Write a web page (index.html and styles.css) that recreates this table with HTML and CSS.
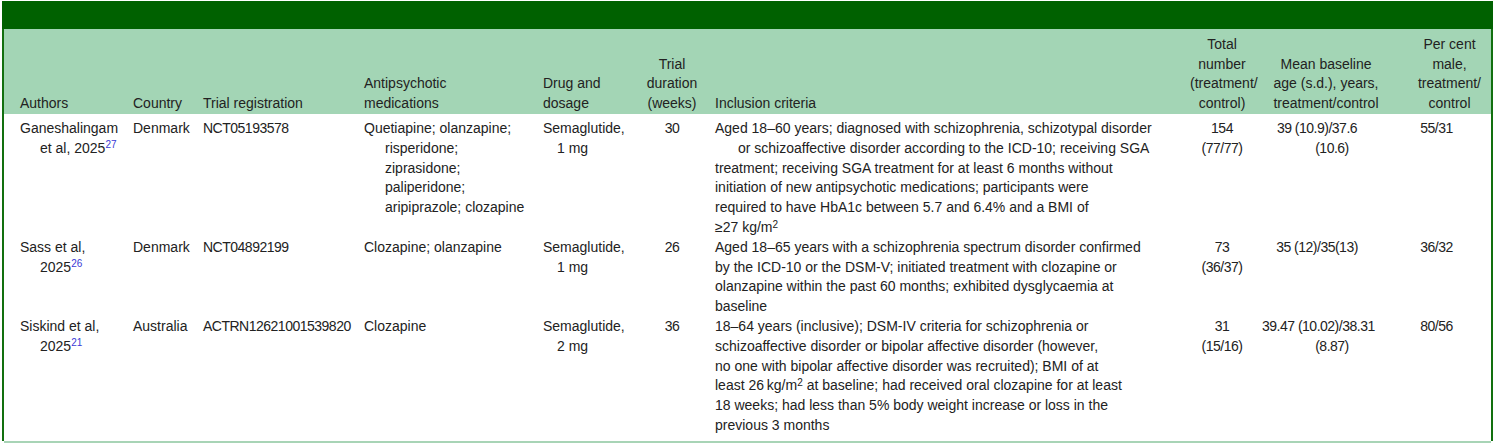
FILE: index.html
```html
<!DOCTYPE html>
<html>
<head>
<meta charset="utf-8">
<link rel="stylesheet" href="styles.css">
</head>
<body>
<div class="wrap">
  <div class="bar"></div>
  <table class="tbl">
    <colgroup>
      <col class="w1"><col class="w2"><col class="w3"><col class="w4"><col class="w5">
      <col class="w6"><col class="w7"><col class="w8"><col class="w9"><col class="w10">
    </colgroup>
    <thead>
      <tr>
        <th class="c1">Authors</th>
        <th>Country</th>
        <th>Trial registration</th>
        <th>Antipsychotic<br>medications</th>
        <th>Drug and<br>dosage</th>
        <th class="c6">Trial<br>duration<br>(weeks)</th>
        <th>Inclusion criteria</th>
        <th class="c8">Total<br>number<br>(treatment/<br>control)</th>
        <th class="c9">Mean baseline<br>age (s.d.), years,<br>treatment/control</th>
        <th class="c10">Per cent<br>male,<br>treatment/<br>control</th>
      </tr>
    </thead>
    <tbody>
      <tr class="first">
        <td class="c1"><div>Ganeshalingam</div><div class="i20">et al, 2025<sup class="ref">27</sup></div></td>
        <td><div>Denmark</div></td>
        <td class="num"><div>NCT05193578</div></td>
        <td><div>Quetiapine; olanzapine;</div><div class="i21">risperidone;</div><div class="i21">ziprasidone;</div><div class="i21">paliperidone;</div><div class="i21">aripiprazole; clozapine</div></td>
        <td><div>Semaglutide,</div><div class="i14">1 mg</div></td>
        <td class="c6 num"><div>30</div></td>
        <td><div>Aged 18–60 years; diagnosed with schizophrenia, schizotypal disorder</div><div class="i23">or schizoaffective disorder according to the ICD-10; receiving SGA</div><div>treatment; receiving SGA treatment for at least 6 months without</div><div>initiation of new antipsychotic medications; participants were</div><div>required to have HbA1c between 5.7 and 6.4% and a BMI of</div><div>≥27 kg/m<sup class="sq">2</sup></div></td>
        <td class="c8 num"><div>154</div><div>(77/77)</div></td>
        <td class="c9b num"><div>39 (10.9)/37.6</div><div class="i30">(10.6)</div></td>
        <td class="c10b num"><div>55/31</div></td>
      </tr>
      <tr>
        <td class="c1"><div>Sass et al,</div><div class="i20">2025<sup class="ref">26</sup></div></td>
        <td><div>Denmark</div></td>
        <td class="num"><div>NCT04892199</div></td>
        <td><div>Clozapine; olanzapine</div></td>
        <td><div>Semaglutide,</div><div class="i14">1 mg</div></td>
        <td class="c6 num"><div>26</div></td>
        <td><div>Aged 18–65 years with a schizophrenia spectrum disorder confirmed</div><div>by the ICD-10 or the DSM-V; initiated treatment with clozapine or</div><div>olanzapine within the past 60 months; exhibited dysglycaemia at</div><div>baseline</div></td>
        <td class="c8 num"><div>73</div><div>(36/37)</div></td>
        <td class="c9b num"><div>35 (12)/35(13)</div></td>
        <td class="c10b num"><div>36/32</div></td>
      </tr>
      <tr class="last">
        <td class="c1"><div>Siskind et al,</div><div class="i20">2025<sup class="ref">21</sup></div></td>
        <td><div>Australia</div></td>
        <td class="num"><div>ACTRN12621001539820</div></td>
        <td><div>Clozapine</div></td>
        <td><div>Semaglutide,</div><div class="i14">2 mg</div></td>
        <td class="c6 num"><div>36</div></td>
        <td><div>18–64 years (inclusive); DSM-IV criteria for schizophrenia or</div><div>schizoaffective disorder or bipolar affective disorder (however,</div><div>no one with bipolar affective disorder was recruited); BMI of at</div><div>least 26&#8201;kg/m<sup class="sq">2</sup> at baseline; had received oral clozapine for at least</div><div>18 weeks; had less than 5% body weight increase or loss in the</div><div>previous 3 months</div></td>
        <td class="c8 num"><div>31</div><div>(15/16)</div></td>
        <td class="c9b num"><div>39.47 (10.02)/38.31</div><div class="i30">(8.87)</div></td>
        <td class="c10b num"><div>80/56</div></td>
      </tr>
    </tbody>
  </table>
</div>
<div class="bottom"></div>
</body>
</html>
```

FILE: styles.css
```css
html, body {
  margin: 0;
  padding: 0;
  background: #ffffff;
}
body {
  font-family: "Liberation Sans", Arial, sans-serif;
  font-size: 14px;
  color: #222222;
}
.wrap {
  margin: 1px 0 0 2px;
  width: 1487px;
  border-left: 2px solid #12700f;
  border-right: 2px solid #12700f;
}
.bar {
  height: 28px;
  background: #006100;
  margin: 0 -2px;
}
.tbl {
  width: 1487px;
  table-layout: fixed;
  border-collapse: collapse;
  border-spacing: 0;
}
.w1 { width: 129px; }
.w2 { width: 70px; }
.w3 { width: 161px; }
.w4 { width: 179px; }
.w5 { width: 97px; }
.w6 { width: 75px; }
.w7 { width: 475px; }
.w8 { width: 64px; }
.w9 { width: 144px; }
.w10 { width: 93px; }

th, td {
  padding: 0;
  text-align: left;
  line-height: 19.8px;
  white-space: nowrap;
  font-weight: normal;
}
thead th {
  background: #a3d5b5;
  height: 85px;
  vertical-align: bottom;
}
tbody td {
  vertical-align: top;
}
tbody tr.first td { padding-top: 5px; }
tbody tr.last td { padding-bottom: 5px; }

.num { letter-spacing: -0.5px; }

.c1 { padding-left: 16px; }
th.c1 { padding-left: 16px; }
.c6 { text-align: center; padding-right: 11px; }
.c8 { text-align: center; }
th.c9 { text-align: center; padding: 0 8px; }
th.c10 { text-align: center; padding: 0 4px 0 14px; }
.c9b { text-align: center; padding-left: 8px; padding-right: 26px; }
.c10b { text-align: center; padding-left: 14px; padding-right: 30px; }

.i20 { padding-left: 20px; }
.i21 { padding-left: 21px; }
.i14 { padding-left: 14px; }
.i23 { padding-left: 23px; }
.i30 { padding-left: 30px; }

.ref {
  font-size: 10px;
  color: #3a3ad6;
  vertical-align: 5px;
  line-height: 0;
}
.sq {
  font-size: 10px;
  vertical-align: 4px;
  line-height: 0;
}
.bottom {
  margin-left: 4px;
  width: 1487px;
  height: 2px;
  background: #a8d4b6;
}
```
